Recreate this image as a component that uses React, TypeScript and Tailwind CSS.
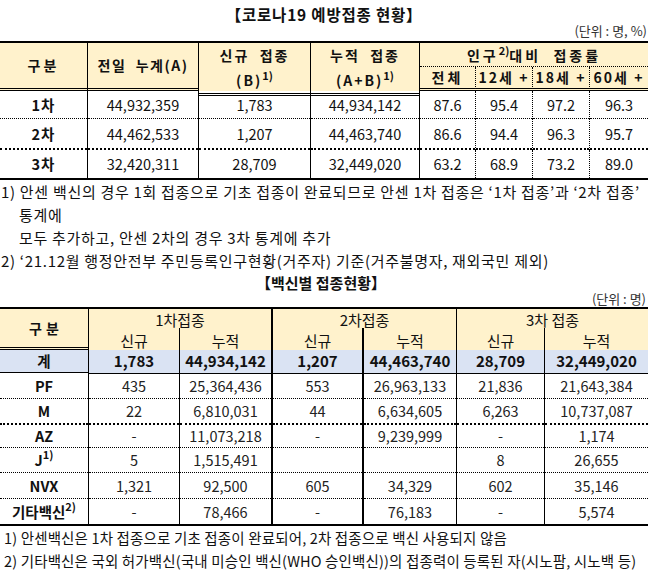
import React from 'react';

type RS = 'n' | 's' | 'd' | 't';
type BS = 'n' | 's' | 'd' | 'd2' | 'w';

const R: Record<RS, string> = {
  n: '',
  s: 'border-r border-black',
  d: 'border-r border-dotted border-black',
  t: 'border-r-2 border-black',
};

const B: Record<BS, string> = {
  n: '',
  s: 'border-b border-black',
  d: 'border-b border-dotted border-black',
  d2: 'border-b-2 border-dotted border-black',
  w: 'border-b-[3px] border-double border-black',
};

const Cell: React.FC<{ r?: RS; b?: BS; cls?: string; inner?: string; children?: React.ReactNode }> = ({
  r = 'n',
  b = 'n',
  cls = '',
  inner = '',
  children,
}) => (
  <div className={`flex flex-col ${cls} ${R[r]}`}>
    <div className={`flex-1 flex items-center justify-center ${B[b]} ${inner}`}>{children}</div>
  </div>
);

const Sup: React.FC<{ children: React.ReactNode }> = ({ children }) => (
  <sup className="text-[11px] font-bold tracking-normal top-[-6px]">{children}</sup>
);

const rateRows = [
  ['1차', '44,932,359', '1,783', '44,934,142', '87.6', '95.4', '97.2', '96.3'],
  ['2차', '44,462,533', '1,207', '44,463,740', '86.6', '94.4', '96.3', '95.7'],
  ['3차', '32,420,311', '28,709', '32,449,020', '63.2', '68.9', '73.2', '89.0'],
];
const rateBottoms: BS[] = ['d', 'd2', 'n'];
const rateRights: RS[] = ['s', 's', 's', 's', 'd', 'd', 'd', 'n'];

const vaccineRows: { label: React.ReactNode; values: string[]; b: BS }[] = [
  { label: '계', values: ['1,783', '44,934,142', '1,207', '44,463,740', '28,709', '32,449,020'], b: 's' },
  { label: 'PF', values: ['435', '25,364,436', '553', '26,963,133', '21,836', '21,643,384'], b: 'd' },
  { label: 'M', values: ['22', '6,810,031', '44', '6,634,605', '6,263', '10,737,087'], b: 'd2' },
  { label: 'AZ', values: ['-', '11,073,218', '-', '9,239,999', '-', '1,174'], b: 'd' },
  {
    label: (
      <>
        J<Sup>1)</Sup>
      </>
    ),
    values: ['5', '1,515,491', '', '', '8', '26,655'],
    b: 'd',
  },
  { label: 'NVX', values: ['1,321', '92,500', '605', '34,329', '602', '35,146'], b: 'd' },
  {
    label: (
      <>
        기타백신<Sup>2)</Sup>
      </>
    ),
    values: ['-', '78,466', '-', '76,183', '-', '5,574'],
    b: 'n',
  },
];
const vaccineRights: RS[] = ['s', 's', 't', 't', 's', 's', 'n'];

const App: React.FC = () => {
  const yellow = 'bg-[#fff2cc]';
  return (
    <div className="w-[648px] h-[571px] overflow-hidden bg-white text-[#111] font-['Noto_Sans_CJK_KR',sans-serif]">
      {/* 예방접종 현황 */}
      <div className="h-[41px] flex flex-col">
        <div className="h-[24px] pt-[4px] text-center font-bold text-[15.5px] leading-[20px] tracking-[0.8px]">
          【코로나19 예방접종 현황】
        </div>
        <div className="text-right text-[13px] leading-[14px] pr-[1px] text-[#333]">(단위 : 명, %)</div>
      </div>

      <div className="grid grid-cols-[88px_111px_112px_109px_56px_57px_57px_58px] grid-rows-[24px_24px_28px_31px_28px] border-t-2 border-b-2 border-black">
        <Cell r="s" b="w" cls={`row-span-2 ${yellow}`} inner="font-bold text-[14px] tracking-[3px]">
          구분
        </Cell>
        <Cell r="s" b="w" cls={`row-span-2 ${yellow}`} inner="font-bold text-[14px] tracking-[1.5px]">
          전일&nbsp;&nbsp;누계(A)
        </Cell>
        <Cell r="s" b="w" cls={`row-span-2 ${yellow}`} inner="flex-col font-bold text-[14px] tracking-[2px] leading-[25px]">
          <span>신규&nbsp;&nbsp;접종</span>
          <span>
            (B)<Sup>1)</Sup>
          </span>
        </Cell>
        <Cell r="s" b="w" cls={`row-span-2 ${yellow}`} inner="flex-col font-bold text-[14px] tracking-[2px] leading-[25px]">
          <span>누적&nbsp;&nbsp;접종</span>
          <span>
            (A+B)<Sup>1)</Sup>
          </span>
        </Cell>
        <Cell b="d" cls={`col-span-4 ${yellow}`} inner="font-bold text-[14px] tracking-[3px] pt-[2px]">
          인구<Sup>2)</Sup>대비&nbsp;&nbsp;접종률
        </Cell>
        <Cell r="d" b="w" cls={yellow} inner="font-bold text-[14px] tracking-[3px]">
          전체
        </Cell>
        <Cell r="d" b="w" cls={yellow} inner="font-bold text-[14px] tracking-[2px]">
          12세 +
        </Cell>
        <Cell r="d" b="w" cls={yellow} inner="font-bold text-[14px] tracking-[2px]">
          18세 +
        </Cell>
        <Cell b="w" cls={yellow} inner="font-bold text-[14px] tracking-[2px]">
          60세 +
        </Cell>

        {rateRows.map((row, ri) =>
          row.map((v, ci) => (
            <Cell
              key={`${ri}-${ci}`}
              r={rateRights[ci]}
              b={rateBottoms[ri]}
              inner={ci === 0 ? 'font-bold text-[14.5px] tracking-[1px]' : 'text-[14.5px]'}
            >
              {v}
            </Cell>
          )),
        )}
      </div>

      <div className="text-[15px] leading-[23px] tracking-[0.7px] whitespace-nowrap">
        <p className="pl-[1px]">
          1) 안센 백신의 경우 1회 접종으로 기초 접종이 완료되므로 안센 1차 접종은 ‘1차 접종’과 ‘2차 접종’
        </p>
        <p className="pl-[19px]">통계에</p>
        <p className="pl-[19px]">모두 추가하고, 안센 2차의 경우 3차 통계에 추가</p>
        <p className="pl-[1px]">2) ‘21.12월 행정안전부 주민등록인구현황(거주자) 기준(거주불명자, 재외국민 제외)</p>
      </div>

      {/* 백신별 접종현황 */}
      <div className="h-[35px] flex flex-col">
        <div className="h-[21px] pt-[1px] text-center font-bold text-[15px] leading-[20px] pr-[6px]">
          【백신별 접종현황】
        </div>
        <div className="-mt-[1px] text-right text-[13px] leading-[14px] pr-[2px] text-[#333]">(단위 : 명)</div>
      </div>

      <div className="grid grid-cols-[89px_91px_93px_91px_93px_88px_103px] grid-rows-[19px_22px_23px_26px_26px_23px_25px_26px_25px] border-t-2 border-b-2 border-black">
        <Cell r="s" b="w" cls={`row-span-2 ${yellow}`} inner="font-bold text-[14px] tracking-[4px] pl-[4px]">
          구분
        </Cell>
        <Cell r="t" b="s" cls={`col-span-2 ${yellow}`} inner="text-[15px]">
          1차접종
        </Cell>
        <Cell r="s" b="s" cls={`col-span-2 ${yellow}`} inner="text-[15px]">
          2차접종
        </Cell>
        <Cell b="s" cls={`col-span-2 ${yellow}`} inner="text-[15px]">
          3차 접종
        </Cell>
        {['신규', '누적', '신규', '누적', '신규', '누적'].map((t, i) => (
          <Cell key={i} r={vaccineRights[i + 1]} b="w" cls={yellow} inner="text-[15px] pt-[2px]">
            {t}
          </Cell>
        ))}

        {vaccineRows.map((row, ri) => {
          const total = ri === 0;
          const bg = total ? 'bg-[#dae3f3]' : '';
          return (
            <React.Fragment key={ri}>
              <Cell r={vaccineRights[0]} b={row.b} cls={bg} inner="font-bold text-[14.5px]">
                {row.label}
              </Cell>
              {row.values.map((v, ci) => (
                <Cell
                  key={ci}
                  r={vaccineRights[ci + 1]}
                  b={row.b}
                  cls={bg}
                  inner={total ? 'font-bold text-[15px]' : 'text-[14.5px] text-[#222]'}
                >
                  {v}
                </Cell>
              ))}
            </React.Fragment>
          );
        })}
      </div>

      <div className="text-[14.5px] leading-[23px] tracking-[0.15px] whitespace-nowrap pl-[4px]">
        <p>1) 안센백신은 1차 접종으로 기초 접종이 완료되어, 2차 접종으로 백신 사용되지 않음</p>
        <p>2) 기타백신은 국외 허가백신(국내 미승인 백신(WHO 승인백신))의 접종력이 등록된 자(시노팜, 시노백 등)</p>
      </div>
    </div>
  );
};

export default App;
